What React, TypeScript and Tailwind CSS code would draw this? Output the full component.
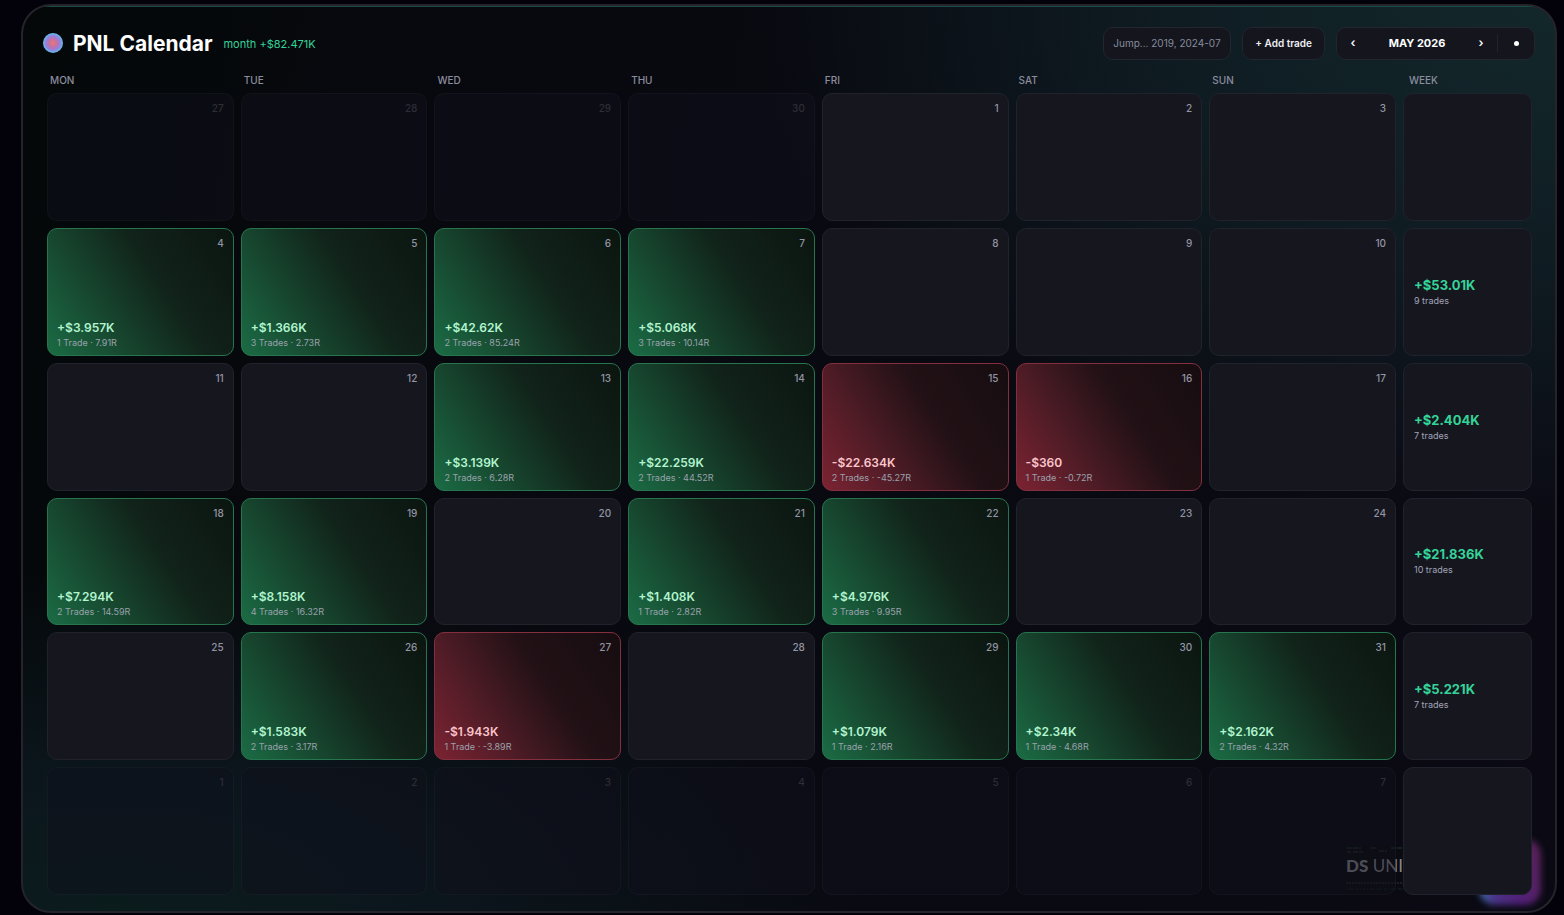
import React from "react";

type Day = { n: number; kind?: "out" | "win" | "loss"; pnl?: string; detail?: string };
type Week = { days: Day[]; total?: string; trades?: string };

const out = (n: number): Day => ({ n, kind: "out" });
const flat = (n: number): Day => ({ n });
const win = (n: number, pnl: string, detail: string): Day => ({ n, kind: "win", pnl, detail });
const loss = (n: number, pnl: string, detail: string): Day => ({ n, kind: "loss", pnl, detail });

const weekdays = ["MON", "TUE", "WED", "THU", "FRI", "SAT", "SUN"];

const weeks: Week[] = [
  { days: [out(27), out(28), out(29), out(30), flat(1), flat(2), flat(3)] },
  {
    days: [
      win(4, "+$3.957K", "1 Trade · 7.91R"),
      win(5, "+$1.366K", "3 Trades · 2.73R"),
      win(6, "+$42.62K", "2 Trades · 85.24R"),
      win(7, "+$5.068K", "3 Trades · 10.14R"),
      flat(8),
      flat(9),
      flat(10),
    ],
    total: "+$53.01K",
    trades: "9 trades",
  },
  {
    days: [
      flat(11),
      flat(12),
      win(13, "+$3.139K", "2 Trades · 6.28R"),
      win(14, "+$22.259K", "2 Trades · 44.52R"),
      loss(15, "-$22.634K", "2 Trades · -45.27R"),
      loss(16, "-$360", "1 Trade · -0.72R"),
      flat(17),
    ],
    total: "+$2.404K",
    trades: "7 trades",
  },
  {
    days: [
      win(18, "+$7.294K", "2 Trades · 14.59R"),
      win(19, "+$8.158K", "4 Trades · 16.32R"),
      flat(20),
      win(21, "+$1.408K", "1 Trade · 2.82R"),
      win(22, "+$4.976K", "3 Trades · 9.95R"),
      flat(23),
      flat(24),
    ],
    total: "+$21.836K",
    trades: "10 trades",
  },
  {
    days: [
      flat(25),
      win(26, "+$1.583K", "2 Trades · 3.17R"),
      loss(27, "-$1.943K", "1 Trade · -3.89R"),
      flat(28),
      win(29, "+$1.079K", "1 Trade · 2.16R"),
      win(30, "+$2.34K", "1 Trade · 4.68R"),
      win(31, "+$2.162K", "2 Trades · 4.32R"),
    ],
    total: "+$5.221K",
    trades: "7 trades",
  },
  { days: [out(1), out(2), out(3), out(4), out(5), out(6), out(7)] },
];

const columns = "grid grid-cols-[repeat(7,minmax(0,1fr))_129px] gap-[7px]";

const cellStyles = {
  flat: "border-[#20222c] bg-[#15161e]",
  out: "border-white/3 bg-[#0f101b]/50",
  win: "border-[#26754f] bg-[linear-gradient(57deg,#1b6c45_0%,#17472f_30%,#11231a_60%,#0b1510_100%)]",
  loss: "border-[#842f3d] bg-[linear-gradient(57deg,#7c2332_0%,#4f1c26_30%,#221116_60%,#160d10_100%)]",
};

function DayCell({ day }: { day: Day }) {
  const kind = day.kind ?? "flat";
  return (
    <td
      className={`flex min-h-24 flex-col justify-between rounded-[10px] border px-[9px] pt-[6px] pb-[5px] ${cellStyles[kind]}`}
    >
      <span
        className={`text-right text-[10px] leading-4 font-medium ${
          kind === "out" ? "text-[#2d2e36]" : "text-[#9394a3]"
        }`}
      >
        {day.n}
      </span>
      {day.pnl && (
        <span className="flex flex-col">
          <span
            className={`text-[12px] leading-4 font-semibold ${kind === "win" ? "text-[#b2f5cf]" : "text-[#fcc5cb]"}`}
          >
            {day.pnl}
          </span>
          <span className="text-[9px] leading-[14px] text-[#9aa2ac]">{day.detail}</span>
        </span>
      )}
    </td>
  );
}

function WeekCell({ week }: { week: Week }) {
  return (
    <td className="flex flex-col justify-center rounded-[10px] border border-[#20232d] bg-[#15161e] px-[10px] pt-[2px]">
      {week.total && (
        <>
          <span className="text-[13px] leading-4 font-bold text-[#34d399]">{week.total}</span>
          <span className="text-[9px] leading-4 text-[#a3a4b8]">{week.trades}</span>
        </>
      )}
    </td>
  );
}

function Watermark() {
  return (
    <div aria-hidden="true" className="absolute right-[110px] bottom-4 h-[52px] w-[100px] bg-[#0a0a11]">
      <svg className="absolute inset-0 h-full w-full" viewBox="0 0 100 52">
        <path
          d="M2 5h14M2 9h4M8 9h10M26 5h5M34 8h8M46 5h12"
          stroke="#162222"
          strokeWidth="2"
          strokeDasharray="5 1"
        />
        <path d="M1 40h70" stroke="#26363c" strokeWidth="1" strokeDasharray="2 1" />
        <path d="M1 46h70" stroke="#1b2529" strokeWidth="1" strokeDasharray="1 2 3 1" />
      </svg>
      <p className="absolute top-3 left-px font-['Lato',sans-serif] text-[17px] leading-[22px] whitespace-nowrap text-[#88888c]">
        <b className="font-black">DS</b> UNIV
      </p>
    </div>
  );
}

export default function App() {
  return (
    <div className="flex min-h-screen bg-[#030109] pt-1 pr-[7px] pb-[2px] pl-[21px] font-['Inter',sans-serif] text-white">
      <main className="relative isolate flex flex-1 flex-col overflow-hidden rounded-[30px] border-2 border-[#24242a] bg-[radial-gradient(ellipse_800px_520px_at_100%_0%,#13282b_0%,#0f1d23_45%,transparent_100%),radial-gradient(ellipse_760px_340px_at_6%_100%,#0b1c1d_0%,#0b161c_40%,transparent_100%),linear-gradient(100deg,#040809_0%,#08090f_30%,#0b0a14_100%)] pt-5 pr-[23px] pb-4 pl-6">
        <span className="absolute top-0 right-5 left-5 h-px bg-[#1a4d47]" />
        <div
          aria-hidden="true"
          className="absolute right-[14px] bottom-[6px] -z-10 h-[66px] w-[62px] rounded-[16px] bg-[linear-gradient(75deg,#3584b4_0%,#4a3488_20%,#511f78_55%,#582350_100%)] blur-[3px]"
        />
        <div className="absolute inset-0 -z-10">
          <Watermark />
        </div>

        <header className="flex items-center justify-between">
          <div className="flex items-center">
            <span className="-ml-1 size-5 rounded-full bg-[radial-gradient(circle_closest-side,#e8796a_0%,#c072ac_42%,#9480e0_72%,#5cc4ec_100%)]" />
            <h1 className="ml-[10px] pt-[2px] text-[21px] leading-8 font-bold">PNL Calendar</h1>
            <p className="ml-[11px] pt-[2px] text-[11px] leading-4 text-[#34d399]">month +$82.471K</p>
          </div>
          <div className="-mr-[3px] flex items-center gap-[11px]">
            <input
              aria-label="Jump to year or month"
              placeholder="Jump... 2019, 2024-07"
              className="h-[33px] w-32 rounded-[10px] border border-[#22262f] bg-[#14151d] px-[9px] text-[10px] text-white placeholder:text-[#858c9c]"
            />
            <button className="h-[33px] rounded-[10px] border border-[#22262f] bg-[#14151d] px-3 text-[10px] font-semibold text-[#eeeef2]">
              + Add trade
            </button>
            <div className="flex h-[33px] w-[199px] items-center rounded-[10px] border border-[#22262f] bg-[#14151d]">
              <button aria-label="Previous month" className="h-full w-8 text-[12px] font-semibold">
                ‹
              </button>
              <span className="flex-1 text-center text-[11px] font-bold">MAY 2026</span>
              <button aria-label="Next month" className="h-full w-8 text-[12px] font-semibold">
                ›
              </button>
              <span className="h-[18px] w-px bg-[#20232b]" />
              <button aria-label="Current month" className="flex h-full w-9 items-center justify-center">
                <span className="size-[5px] rounded-full bg-white" />
              </button>
            </div>
          </div>
        </header>

        <table className="mt-[10px] flex flex-1 flex-col">
          <thead className="block">
            <tr className={columns}>
              {weekdays.map((name) => (
                <th key={name} className="pl-[3px] text-left text-[10px] leading-5 font-medium text-[#8b8c9e]">
                  {name}
                </th>
              ))}
              <th className="pl-[6px] text-left text-[10px] leading-5 font-medium text-[#8b8c9e]">WEEK</th>
            </tr>
          </thead>
          <tbody className="mt-[3px] grid flex-1 auto-rows-fr gap-[7px]">
            {weeks.map((week, i) => (
              <tr key={i} className={columns}>
                {week.days.map((day) => (
                  <DayCell key={day.n} day={day} />
                ))}
                <WeekCell week={week} />
              </tr>
            ))}
          </tbody>
        </table>
      </main>
    </div>
  );
}
